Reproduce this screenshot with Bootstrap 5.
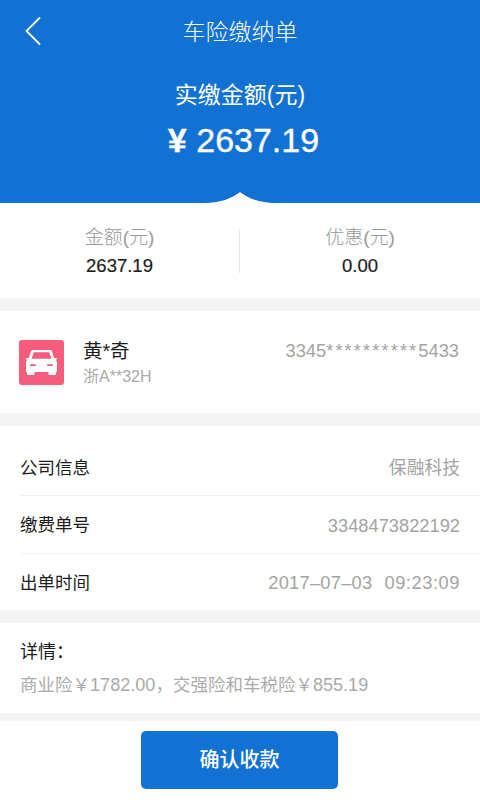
<!DOCTYPE html>
<html lang="zh-CN">
<head>
<meta charset="utf-8">
<title>车险缴纳单</title>
<link rel="stylesheet" href="https://cdn.jsdelivr.net/npm/bootstrap@5.3.0/dist/css/bootstrap.min.css">
<style>
html,body{height:800px;overflow:hidden}
body{font-family:"Liberation Sans","Noto Sans CJK SC",sans-serif;background:#f4f4f4;color:#1c1c1c;width:480px}
.hero{background:#1272d3;height:203px;color:#fff;position:relative}
.topbar{height:62px;position:relative;padding-top:1px}
.back-ico{position:absolute;left:25px;top:17px;width:16px;height:28px}
.page-title{font-size:23px;font-weight:300;line-height:30px}
.pay-label{font-size:23px;line-height:30px;margin-top:18px}
.pay-value{font-size:34px;line-height:40px;margin-top:10px;padding-left:7px;-webkit-text-stroke:.35px #fff}
.yen-mark{font-weight:700}
.notch{position:absolute;left:205px;bottom:0;width:70px;height:11px;display:block}
.summary{height:95px;background:#fff}
.sum-col{flex:1 1 0;text-align:center;padding-top:23px}
.sum-col-a{flex:0 0 239px}
.sum-label{font-size:19px;line-height:24px;color:#999;font-weight:300}
.sum-value{font-size:18.5px;line-height:24px;margin-top:4px;color:#1c1c1c;-webkit-text-stroke:.2px #1c1c1c}
.sum-split{width:1px;height:44px;background:#e4e4e4;margin-top:26px}
.sect{background:#fff}
.person{height:102px;margin-top:13px;padding:29px 21px 0 19px}
.car-box{width:45px;height:45px;background:#f65c7c;border-radius:3px;flex:none}
.person-main{margin-left:19px}
.person-name{font-size:19.5px;line-height:22px}
.plate{font-size:16px;line-height:20px;color:#aaa;margin-top:5px}
.card-no{font-size:18.3px;line-height:22px;color:#a3a3a3;margin-left:auto}
.stars{letter-spacing:2.1px}
.infos{height:184px;margin-top:13px;padding-left:20px}
.info-row{padding-right:20px;font-size:17.5px;border-bottom:1px solid #f0f0f0}
.info-row:nth-child(1){height:70px;padding-top:15px}
.info-row:nth-child(2){height:58px;padding-top:2px}
.info-row:nth-child(3){height:56px;border-bottom:0;padding-top:2px}
.info-val{color:#a3a3a3;font-size:18.3px}
.cjk-val{font-size:17.8px}
.date-val{letter-spacing:.25px}
.spaced{margin-left:12px;letter-spacing:.55px}
.details{height:90px;margin-top:13px;padding:17px 20px 0}
.det-title{font-size:18px;line-height:24px}
.det-text{font-size:17.5px;line-height:24px;color:#aaa;margin-top:9px;white-space:nowrap}
.digits{font-size:18.1px}
.foot{height:79px;margin-top:8px;padding-top:10px}
.pay-btn{width:197px;height:58px;background:#1272d3;border:0;border-radius:5px;color:#fff;font-size:20px;font-weight:500;margin-left:141px;display:block;padding:0}
.pay-btn:hover{background:#1272d3;color:#fff}
</style>
</head>
<body>
<header class="hero text-center">
  <div class="topbar d-flex align-items-center justify-content-center">
    <svg class="back-ico" viewBox="0 0 16 28" fill="none" stroke="#fff" stroke-width="1.8" stroke-linecap="round" stroke-linejoin="round"><path d="M14.5 1 1.500 14l13 13"/></svg>
    <div class="page-title">车险缴纳单</div>
  </div>
  <div class="pay-label">实缴金额(元)</div>
  <div class="pay-value"><span class="yen-mark">¥</span> 2637.19</div>
  <svg class="notch" viewBox="0 0 70 11"><path fill="#fff" d="M0 11C14 11 26 7 35 0 44 7 56 11 70 11Z"/></svg>
</header>
<section class="summary d-flex">
  <div class="sum-col sum-col-a">
    <div class="sum-label">金额(元)</div>
    <div class="sum-value">2637.19</div>
  </div>
  <div class="sum-split"></div>
  <div class="sum-col">
    <div class="sum-label">优惠(元)</div>
    <div class="sum-value">0.00</div>
  </div>
</section>
<section class="sect person d-flex align-items-start">
  <div class="car-box d-flex align-items-center justify-content-center">
    <svg width="31" height="25" viewBox="0 0 31 25"><path fill="#fff" fill-rule="evenodd" d="M7 0h17c1 0 1.700.5 2 1.400L28.200 8H30.300c.4 0 .7.300.7.700s-.3.700-.7.700H29.500C30.500 10.400 31 11.600 31 13V21.500c0 .5-.3.800-.8.800H30V24c0 .6-.4 1-1 1H23.500c-.6 0-1-.4-1-1V22H8.500v2c0 .6-.4 1-1 1H2c-.6 0-1-.4-1-1V22.300H.8c-.5 0-.8-.3-.8-.8V13c0-1.400.5-2.600 1.500-3.600H.7C.3 9.400 0 9.100 0 8.700S.3 8 .7 8H2.800L5 1.400C5.300.5 6 0 7 0ZM7.800 2.600 5.500 8.800H25.500L23.200 2.600C23.100 2.300 22.900 2.200 22.600 2.200H8.400C8.100 2.200 7.900 2.300 7.800 2.600ZM5 14.300c-.6 0-1 .4-1 .9s.4.900 1 .9H9c.6 0 1-.4 1-.9s-.4-.9-1-.9ZM22 14.300c-.6 0-1 .4-1 .9s.4.900 1 .9H26c.6 0 1-.4 1-.9s-.4-.9-1-.9Z"/></svg>
  </div>
  <div class="person-main">
    <div class="person-name">黄*奇</div>
    <div class="plate">浙A**32H</div>
  </div>
  <div class="card-no">3345<span class="stars">**********</span>5433</div>
</section>
<section class="sect infos">
  <div class="info-row d-flex justify-content-between align-items-center"><span>公司信息</span><span class="info-val cjk-val">保融科技</span></div>
  <div class="info-row d-flex justify-content-between align-items-center"><span>缴费单号</span><span class="info-val">3348473822192</span></div>
  <div class="info-row d-flex justify-content-between align-items-center"><span>出单时间</span><span class="info-val"><span class="date-val">2017–07–03</span><span class="spaced">09:23:09</span></span></div>
</section>
<section class="sect details">
  <div class="det-title">详情&#xFF1A;</div>
  <div class="det-text">商业险&#xFFE5;<span class="digits">1782.00</span>&#xFF0C;交强险和车税险&#xFFE5;<span class="digits">855.19</span></div>
</section>
<footer class="sect foot">
  <button type="button" class="btn pay-btn">确认收款</button>
</footer>
<script src="https://cdn.jsdelivr.net/npm/bootstrap@5.3.0/dist/js/bootstrap.bundle.min.js"></script>
</body>
</html>
